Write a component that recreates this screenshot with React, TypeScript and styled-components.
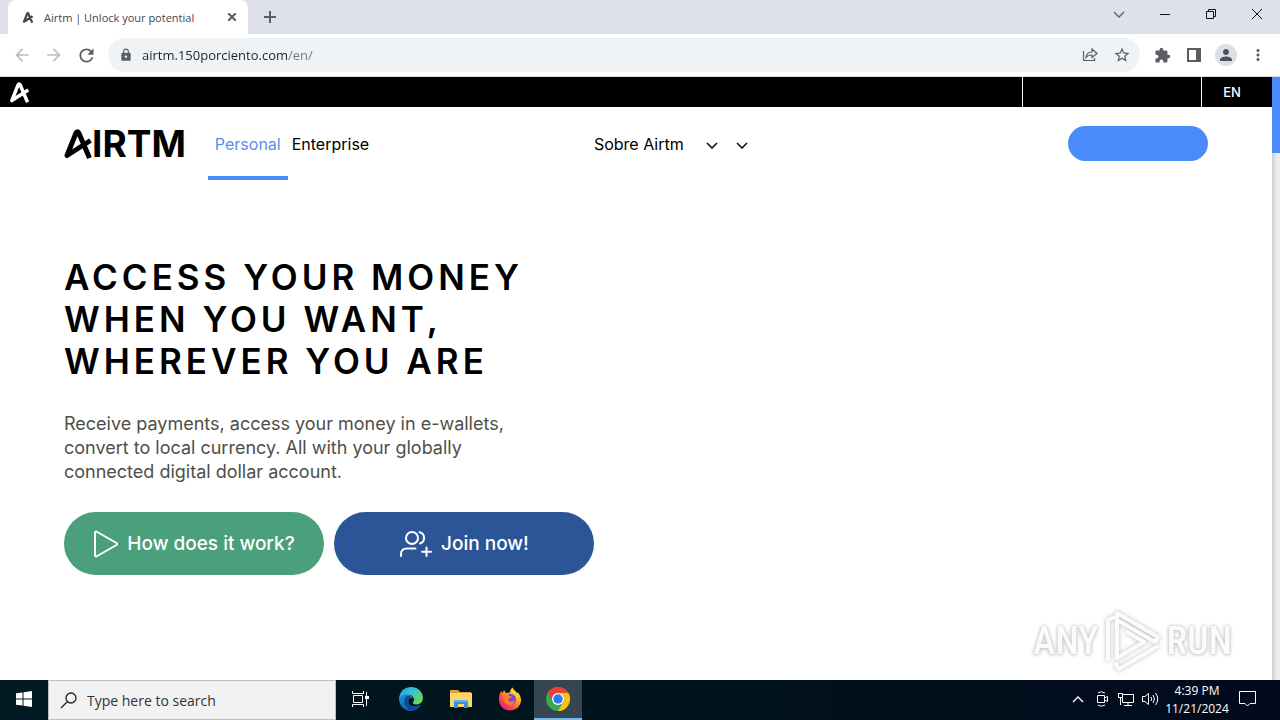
import React from 'react';
import styled, { createGlobalStyle, css } from 'styled-components';
import {
  MdArrowBack,
  MdArrowForward,
  MdRefresh,
  MdLock,
  MdStarBorder,
  MdExtension,
  MdPerson,
  MdMoreVert,
} from 'react-icons/md';

const GlobalStyle = createGlobalStyle`
  *, *::before, *::after { box-sizing: border-box; }
  body { margin: 0; background: #fff; }
  h1, p { margin: 0; }
  a { color: inherit; text-decoration: none; }
  button, input { margin: 0; padding: 0; border: 0; background: none; color: inherit; font: inherit; outline: none; }
  svg { display: block; flex: none; }
`;

const ui = '"Open Sans", "Noto Sans", sans-serif';
const brand = 'Inter, "Liberation Sans", sans-serif';

const Desktop = styled.div`
  display: flex;
  flex-direction: column;
  min-height: 100vh;
  font-family: ${ui};
`;

/* Browser frame */
const TabStrip = styled.div`
  display: flex;
  align-items: stretch;
  height: 34px;
  padding-left: 8px;
  background: #dee1e9;
`;

const Tab = styled.div`
  display: flex;
  align-items: center;
  width: 240px;
  padding: 0 10px 0 14px;
  border-radius: 8px 8px 0 0;
  background: #fff;
  color: #45474a;
  font-size: 11px;
`;

const TabTitle = styled.span`
  flex: 1;
  margin-left: 10px;
  white-space: nowrap;
`;

const IconButton = styled.button<{ $w?: number; $dim?: boolean }>`
  display: flex;
  align-items: center;
  justify-content: center;
  width: ${(p) => p.$w ?? 32}px;
  color: ${(p) => (p.$dim ? '#bbbdbf' : '#5a5d61')};
`;

const WindowButtons = styled.div`
  display: flex;
  height: 28px;
  margin-left: auto;
  color: #111;
`;

const Toolbar = styled.div`
  display: flex;
  align-items: center;
  height: 43px;
  padding: 0 6px;
  border-bottom: 1px solid #dcdee1;
  background: #fff;
`;

const Omnibox = styled.div`
  display: flex;
  flex: 1;
  align-items: center;
  height: 34px;
  margin: 0 6px;
  padding: 0 2px 0 11px;
  border-radius: 17px;
  background: #f0f3f5;
  color: #5a5d61;
`;

const Address = styled.input`
  flex: 1;
  min-width: 0;
  margin-left: 9px;
  background: linear-gradient(90deg, #202124 145px, #73767a 145px);
  -webkit-background-clip: text;
  background-clip: text;
  color: transparent;
  font-size: 13px;
  line-height: 20px;
`;

const Avatar = styled.span`
  display: flex;
  align-items: center;
  justify-content: center;
  width: 22px;
  height: 22px;
  border-radius: 50%;
  background: #dcdfe6;
  color: #4c5162;
`;

/* Site */
const Viewport = styled.div`
  display: flex;
  flex: 1;
`;

const Site = styled.div`
  position: relative;
  flex: 1;
  min-width: 0;
  background: #fff;
  font-family: ${brand};
`;

const ScrollTrack = styled.div`
  width: 8px;
  background: linear-gradient(90deg, #cfcfcf, #ececec 60%);
`;

const ScrollThumb = styled.div`
  height: 76px;
  background: #4a8bf9;
`;

const TopBar = styled.div`
  display: flex;
  align-items: stretch;
  height: 30px;
  padding-left: 9px;
  background: #000;
  color: #fff;
`;

const TopHome = styled.a`
  display: flex;
  align-items: center;
  margin-right: auto;
`;

const TopCell = styled.div<{ $w: number }>`
  display: flex;
  align-items: center;
  justify-content: center;
  width: ${(p) => p.$w}px;
  border-left: 1px solid #fff;
`;

const Language = styled.button`
  padding-right: 10px;
  font-size: 13px;
  font-weight: 500;
  line-height: 16px;
`;

const NavBar = styled.nav`
  display: grid;
  grid-template-columns: 11fr 10fr auto;
  align-items: center;
  height: 73px;
  padding: 0 64px;
`;

const NavGroup = styled.div<{ $gap?: number }>`
  display: flex;
  align-items: center;
  align-self: stretch;
  gap: ${(p) => p.$gap ?? 0}px;
  font-size: 16px;
`;

const Logo = styled.a`
  display: flex;
  align-items: center;
  margin-right: 22px;
  color: #000;
  font-size: 37px;
  font-weight: 700;
  line-height: 38px;
`;

const NavLink = styled.a<{ $active?: boolean }>`
  display: flex;
  align-items: center;
  align-self: stretch;
  padding: 4px 4px 0;
  border-bottom: 4px solid transparent;
  color: #000;
  ${(p) =>
    p.$active &&
    css`
      padding: 4px 7px 0;
      border-color: #4a8bf9;
      color: #5b8eee;
    `}
`;

const MenuButton = styled.button`
  display: flex;
  padding-top: 4px;
  color: #111;
`;

const SignIn = styled.button`
  width: 140px;
  height: 35px;
  border-radius: 18px;
  background: #4a8bf9;
`;

const Hero = styled.main`
  padding: 76px 64px 105px;
`;

const Headline = styled.h1`
  color: #000;
  font-size: 35px;
  font-weight: 600;
  letter-spacing: 4px;
  line-height: 42px;
`;

const Lead = styled.p`
  margin-top: 30px;
  color: #4f4f4a;
  font-size: 18px;
  line-height: 24px;
`;

const Actions = styled.div`
  display: flex;
  gap: 10px;
  margin-top: 28px;
`;

const Action = styled.a<{ $color: string }>`
  display: flex;
  align-items: center;
  justify-content: center;
  gap: 8px;
  width: 260px;
  height: 63px;
  border-radius: 32px;
  background: ${(p) => p.$color};
  color: #fff;
  font-size: 19px;
  font-weight: 500;
`;

const Watermark = styled.div`
  position: absolute;
  right: 40px;
  bottom: 8px;
  display: flex;
  align-items: center;
  gap: 4px;
  color: #fbfbfb;
  font-family: "Roboto Condensed", "Liberation Sans Narrow", Roboto, sans-serif;
  font-size: 38px;
  font-weight: 500;
  line-height: 62px;
  text-shadow: 0 0 3px #bbb, 0 1px 4px #ccc;
  svg { filter: drop-shadow(0 0 2px #bbb); }
`;

/* Taskbar */
const TaskBar = styled.footer`
  display: flex;
  align-items: stretch;
  height: 40px;
  background: linear-gradient(90deg, #021a22, #00121c 60%, #020a1c);
  color: #fff;
`;

const TaskButton = styled.button<{ $active?: boolean; $w?: number }>`
  display: flex;
  align-items: center;
  justify-content: center;
  width: ${(p) => p.$w ?? 49}px;
  border-bottom: 2px solid transparent;
  ${(p) =>
    p.$active &&
    css`
      border-color: #76b9ed;
      background: #354650;
    `}
`;

const Search = styled.label`
  display: flex;
  align-items: center;
  gap: 10px;
  width: 288px;
  padding-left: 11px;
  border: 1px solid #bfbfbf;
  background: #f2f2f2;
  color: #222;
`;

const SearchInput = styled.input`
  flex: 1;
  min-width: 0;
  font-size: 14px;
  &::placeholder { color: #333; opacity: 1; }
`;

const Tray = styled.div`
  display: flex;
  align-items: stretch;
  margin-left: auto;
  padding-right: 18px;
`;

const Clock = styled.time`
  width: 70px;
  font-size: 12px;
  line-height: 18px;
  padding-top: 2px;
  text-align: center;
  white-space: nowrap;
`;

const AirtmMark = ({ w, h, stroke = 5 }: { w: number; h: number; stroke?: number }) => (
  <svg width={w} height={h} viewBox="0 0 28 30" fill="none" stroke="currentColor" strokeWidth={stroke} strokeLinejoin="round" aria-hidden="true">
    <path d="M26.5 11.5L3 26.5L12 4Q13.3 1.600 14.800 4L25.500 29" />
  </svg>
);

const Line = ({ w, h, d, box, sw = 1 }: { w: number; h: number; d: string; box?: string; sw?: number }) => (
  <svg width={w} height={h} viewBox={box ?? `0 0 ${w} ${h}`} fill="none" stroke="currentColor" strokeWidth={sw} aria-hidden="true">
    <path d={d} />
  </svg>
);

const PlayIcon = () => (
  <svg width="26" height="28" viewBox="0 0 26 28" fill="none" stroke="#fff" strokeWidth="2" strokeLinejoin="round" aria-hidden="true">
    <path d="M2 3.200Q2 .7 4.200 2L23.500 13Q24.800 14 23.500 15L4.200 26Q2 27.200 2 24.800Z" />
  </svg>
);

const AddUsersIcon = () => (
  <svg width="34" height="28" viewBox="0 0 34 28" fill="none" stroke="#fff" strokeWidth="2" strokeLinecap="round" aria-hidden="true">
    <circle cx="13" cy="8" r="6" />
    <path d="M20.500 2.300C26.500 3.500 26.500 12 21 13.500M2 26V24Q2 18.500 8 18.500H16.500M27.500 17.500V26M23 21.800H32" />
  </svg>
);

const WatermarkPlay = () => (
  <svg width="60" height="62" viewBox="0 0 60 62" fill="none" stroke="#fbfbfb" strokeWidth="4" strokeLinejoin="round" aria-hidden="true">
    <path d="M6 51V10L13 7M15 42V3L56 27L53 32L15 10M15 20V48L42 32L24 21M13 53L17 59L56 36" />
  </svg>
);

const WindowsLogo = () => (
  <svg width="16" height="16" viewBox="0 0 16 16" fill="#fff" aria-hidden="true">
    <path d="M0 2.300L6.500 1.400V7.500H0ZM7.500 1.200L16 0V7.500H7.500ZM0 8.500H6.500V14.600L0 13.700ZM7.500 8.500H16V16L7.500 14.800Z" />
  </svg>
);

const TaskViewIcon = () => (
  <svg width="17" height="16" viewBox="0 0 17 16" fill="none" stroke="#fff" aria-hidden="true">
    <path d="M.5 0V2.500H11.500V0M.5 16V13.500H11.500V16M1.500 4.500H10.500V11.500H1.500ZM14.500 1V15" />
    <path d="M13 5H17V8H13Z" fill="#fff" stroke="none" />
  </svg>
);

const EdgeIcon = () => (
  <svg width="26" height="26" viewBox="0 0 24 24" aria-hidden="true">
    <defs>
      <linearGradient id="edgeTop" x1="0" y1="0" x2="1" y2="0.6">
        <stop offset="0" stopColor="#239be2" />
        <stop offset=".5" stopColor="#35c1d6" />
        <stop offset="1" stopColor="#63d957" />
      </linearGradient>
      <linearGradient id="edgeLow" x1="0" y1="0" x2="1" y2="1">
        <stop offset="0" stopColor="#1b8fdc" />
        <stop offset="1" stopColor="#0c4e9c" />
      </linearGradient>
    </defs>
    <path d="M1 11C2 4 7 1 12 1C19 1 23 6 23 11C23 15 20 17 17 17C14.500 17 13 16 14 14.500C16 12 14 8 9.500 8C5 8 1.500 10 1 14Z" fill="url(#edgeTop)" />
    <path d="M1 12C2 8.500 6 7.500 9 8C12 8.300 14.500 10 14.500 12.500C13 10 9.500 11 9.500 14.500C9.500 18.500 14 20 21 17.500C18.500 22 14 23 12 23C6 23 1 18 1 12Z" fill="url(#edgeLow)" />
    <path d="M7 10C4.500 14 6 20.500 12.500 23C15 23 19 21 21 17.500C14 20 9.500 18.500 9.500 14.500C9.500 12 11 10.500 12.500 10.500C11 9 9 8.800 7 10Z" fill="#104a92" />
  </svg>
);

const FolderIcon = () => (
  <svg width="22" height="20" viewBox="0 0 22 20" aria-hidden="true">
    <path d="M0 1H8L10 3H21V8H0Z" fill="#e2a12f" />
    <path d="M0 4H22V18H0Z" fill="#fbd66e" />
    <path d="M4 19V11H18V19H14V15H8V19Z" fill="#3a91d2" />
    <path d="M4 11H18V13H4Z" fill="#64b3e8" />
  </svg>
);

const FirefoxIcon = () => (
  <svg width="24" height="24" viewBox="0 0 24 24" aria-hidden="true">
    <defs>
      <linearGradient id="fox" x1=".85" y1=".1" x2=".2" y2=".9">
        <stop offset="0" stopColor="#ffe43d" />
        <stop offset=".4" stopColor="#ff9a22" />
        <stop offset=".75" stopColor="#ff4545" />
        <stop offset="1" stopColor="#e8208f" />
      </linearGradient>
    </defs>
    <path d="M3 4L4.500 6L6 3L8 6L12 5.500C12 3 13 1.500 15 .5C15 3 18 4 19 6L20 5.500C22 8 23.300 11 23 14C22 20 17.500 23.500 12 23.500C6 23.500 1.500 19.500 1 13.500C.8 10 1.500 7 3 4Z" fill="url(#fox)" />
    <circle cx="12.500" cy="12.500" r="5.500" fill="#7745d8" />
    <path d="M5 7.500C8 6.500 10 7.500 11.500 9L14 9.500C13.500 11.500 10.500 11 10 12.500C11 15 14 15.500 17 13C16.500 17 13 19 9.500 17.500C6 16 4.500 11.500 5 7.500Z" fill="#ff7f2c" />
    <path d="M13 5C17 5 19 9 18 13.500C20 10 19 6 15.500 3Z" fill="#ffd43a" />
  </svg>
);

const ChromeIcon = () => (
  <svg width="24" height="24" viewBox="0 0 24 24" aria-hidden="true">
    <circle cx="12" cy="12" r="12" fill="#34a853" />
    <path d="M1.600 6A12 12 0 0 1 22.400 6H12A6 6 0 0 0 6.800 15Z" fill="#ea4335" />
    <path d="M22.400 6A12 12 0 0 1 12 24L17.200 15A6 6 0 0 0 12 6Z" fill="#fbc116" />
    <circle cx="12" cy="12" r="6" fill="#fff" />
    <circle cx="12" cy="12" r="4.700" fill="#3079ea" />
  </svg>
);

const chevron = 'M1 1L6 6L11 1';

export default function App() {
  return (
    <Desktop>
      <GlobalStyle />
      <TabStrip>
        <Tab>
          <AirtmMark w={12} h={11} stroke={6} />
          <TabTitle>Airtm | Unlock your potential</TabTitle>
          <IconButton $w={12} aria-label="Close tab">
            <Line w={8} h={8} sw={2} d="M0 0L8 8M8 0L0 8" />
          </IconButton>
        </Tab>
        <IconButton $w={44} aria-label="New tab">
          <Line w={12} h={12} sw={2} d="M6 0V12M0 6H12" />
        </IconButton>
        <WindowButtons>
          <IconButton $w={46} aria-label="Search tabs">
            <Line w={12} h={7} sw={1.3} d={chevron} />
          </IconButton>
          <IconButton $w={46} aria-label="Minimize">
            <svg width="10" height="2" aria-hidden="true"><path d="M0 1.500H10" stroke="#111" /></svg>
          </IconButton>
          <IconButton $w={46} aria-label="Restore">
            <svg width="10" height="10" fill="none" stroke="#111" aria-hidden="true"><path d="M.5 2.500H7.500V9.500H.5ZM2.500 2.500V.5H9.500V7.500H7.500" /></svg>
          </IconButton>
          <IconButton $w={46} aria-label="Close">
            <svg width="10" height="10" stroke="#111" aria-hidden="true"><path d="M0 0L10 10M10 0L0 10" /></svg>
          </IconButton>
        </WindowButtons>
      </TabStrip>

      <Toolbar>
        <IconButton $dim aria-label="Back"><MdArrowBack size={20} /></IconButton>
        <IconButton $dim aria-label="Forward"><MdArrowForward size={20} /></IconButton>
        <IconButton aria-label="Reload"><MdRefresh size={21} /></IconButton>
        <Omnibox>
          <MdLock size={14} />
          <Address aria-label="Address" defaultValue="airtm.150porciento.com/en/" />
          <IconButton aria-label="Share">
            <Line w={16} h={14} sw={1.2} d="M1.500 3V12.500H12.500V10M4 9.500C4.500 5.500 7 4 10 4V1L15 5.500L10 9.500V7C7.500 7 5.500 7.500 4 9.500Z" />
          </IconButton>
          <IconButton aria-label="Bookmark"><MdStarBorder size={18} /></IconButton>
        </Omnibox>
        <IconButton aria-label="Extensions"><MdExtension size={17} /></IconButton>
        <IconButton aria-label="Side panel">
          <svg width="14" height="14" fill="none" stroke="currentColor" strokeWidth="2" aria-hidden="true"><path d="M1 1H13V13H1ZM10 1V13M12 1V13" /></svg>
        </IconButton>
        <IconButton aria-label="Profile"><Avatar><MdPerson size={18} /></Avatar></IconButton>
        <IconButton aria-label="Menu"><MdMoreVert size={18} /></IconButton>
      </Toolbar>

      <Viewport>
        <Site>
          <TopBar>
            <TopHome href="#" aria-label="Airtm home"><AirtmMark w={21} h={21} stroke={5} /></TopHome>
            <TopCell $w={179} />
            <TopCell $w={71}><Language>EN</Language></TopCell>
          </TopBar>
          <NavBar>
            <NavGroup>
              <Logo href="#"><AirtmMark w={28} h={30} />IRTM</Logo>
              <NavLink href="#" $active>Personal</NavLink>
              <NavLink href="#">Enterprise</NavLink>
            </NavGroup>
            <NavGroup $gap={18}>
              <NavLink href="#">Sobre Airtm</NavLink>
              <MenuButton aria-label="Open Airtm menu"><Line w={12} h={7} sw={1.6} d={chevron} /></MenuButton>
              <MenuButton aria-label="Open more menu"><Line w={12} h={7} sw={1.6} d={chevron} /></MenuButton>
            </NavGroup>
            <SignIn aria-label="Sign in" />
          </NavBar>
          <Hero>
            <Headline>
              ACCESS YOUR MONEY<br />WHEN YOU WANT,<br />WHEREVER YOU ARE
            </Headline>
            <Lead>
              Receive payments, access your money in e-wallets,<br />
              convert to local currency. All with your globally<br />
              connected digital dollar account.
            </Lead>
            <Actions>
              <Action href="#" $color="#4aa07c"><PlayIcon />How does it work?</Action>
              <Action href="#" $color="#2c5597"><AddUsersIcon />Join now!</Action>
            </Actions>
          </Hero>
          <Watermark><span>ANY</span><WatermarkPlay /><span>RUN</span></Watermark>
        </Site>
        <ScrollTrack><ScrollThumb /></ScrollTrack>
      </Viewport>

      <TaskBar>
        <TaskButton $w={48} aria-label="Start"><WindowsLogo /></TaskButton>
        <Search>
          <Line w={17} h={17} sw={1.3} d="M7.500 9.500L1 16M11 1A5 5 0 1 1 11 11A5 5 0 1 1 11 1" />
          <SearchInput placeholder="Type here to search" aria-label="Type here to search" />
        </Search>
        <TaskButton aria-label="Task view"><TaskViewIcon /></TaskButton>
        <TaskButton $w={51} aria-label="Edge"><EdgeIcon /></TaskButton>
        <TaskButton aria-label="File Explorer"><FolderIcon /></TaskButton>
        <TaskButton aria-label="Firefox"><FirefoxIcon /></TaskButton>
        <TaskButton $w={48} $active aria-label="Chrome"><ChromeIcon /></TaskButton>
        <Tray>
          <TaskButton $w={24} aria-label="Show hidden icons"><Line w={12} h={7} sw={1.3} d="M1 6L6 1L11 6" /></TaskButton>
          <TaskButton $w={24} aria-label="Camera">
            <Line w={12} h={16} d="M1.500 4.500H8.500V11.500H1.500ZM8.500 7L11.500 5.500V10.500L8.500 9M2 2Q5 -.5 9 2M2 14Q5 16.500 9 14" />
          </TaskButton>
          <TaskButton $w={24} aria-label="Network">
            <Line w={16} h={14} d="M5 2.500H15.500V10.500H4.500V6M10 10.500V13.500M6 13.500H14M.5 1.500H4.500V5.500H.5ZM2.500 5.500V13" />
          </TaskButton>
          <TaskButton $w={24} aria-label="Volume">
            <Line w={17} h={14} d="M.5 4.500H3L6.500 1.500V12.500L3 9.500H.5ZM9 5Q10.500 7 9 9M11 3Q14 7 11 11M13.500 1Q18 7 13.500 13" />
          </TaskButton>
          <Clock>4:39 PM<br />11/21/2024</Clock>
          <TaskButton $w={30} aria-label="Notifications">
            <Line w={17} h={16} d="M.5 .5H16.500V12.500H11L8.500 15L6 12.500H.5Z" />
          </TaskButton>
        </Tray>
      </TaskBar>
    </Desktop>
  );
}
